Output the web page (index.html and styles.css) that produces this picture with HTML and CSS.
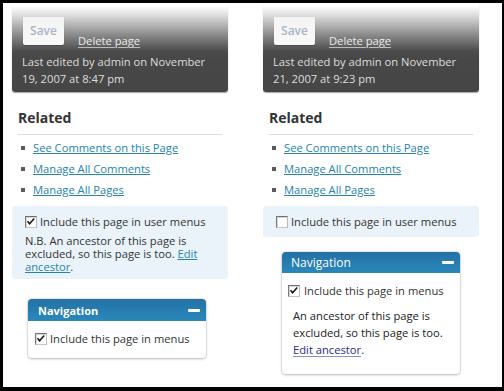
FILE: index.html
```html
<!DOCTYPE html>
<html>
<head>
<meta charset="utf-8">
<link rel="stylesheet" href="styles.css">
</head>
<body>
<div class="frame">
  <div class="col">
    <div class="meta">
      <div class="actions"><span class="save">Save</span><a class="delete" href="#">Delete page</a></div>
      <p class="edited">Last edited by admin on November<br>19, 2007 at 8:47 pm</p>
    </div>
    <div class="related">
      <h3>Related</h3>
      <ul>
        <li><a href="#">See Comments on this Page</a></li>
        <li><a href="#">Manage All Comments</a></li>
        <li><a href="#">Manage All Pages</a></li>
      </ul>
    </div>
    <div class="menu-opt menu-opt-tall">
      <label class="check-row"><span class="cb"><svg viewBox="0 0 12 12" width="12" height="12"><polyline points="2.5,5.2 4.6,7.8 9.2,2.6" fill="none" stroke="#111" stroke-width="1.5"/></svg></span>Include this page in user menus</label>
      <p class="note">N.B. An ancestor of this page is<br>excluded, so this page is too. <a href="#">Edit</a><br><a href="#">ancestor</a>.</p>
    </div>
    <div class="nav-box nav-left">
      <div class="nav-head"><span class="nav-title">Navigation</span><span class="minus"></span></div>
      <div class="nav-body">
        <label class="check-row"><span class="cb"><svg viewBox="0 0 12 12" width="12" height="12"><polyline points="2.5,5.2 4.6,7.8 9.2,2.6" fill="none" stroke="#111" stroke-width="1.5"/></svg></span>Include this page in menus</label>
      </div>
    </div>
  </div>
  <div class="col">
    <div class="meta">
      <div class="actions"><span class="save">Save</span><a class="delete" href="#">Delete page</a></div>
      <p class="edited">Last edited by admin on November<br>21, 2007 at 9:23 pm</p>
    </div>
    <div class="related">
      <h3>Related</h3>
      <ul>
        <li><a href="#">See Comments on this Page</a></li>
        <li><a href="#">Manage All Comments</a></li>
        <li><a href="#">Manage All Pages</a></li>
      </ul>
    </div>
    <div class="menu-opt">
      <label class="check-row"><span class="cb"></span>Include this page in user menus</label>
    </div>
    <div class="nav-box nav-right">
      <div class="nav-head"><span class="nav-title">Navigation</span><span class="minus"></span></div>
      <div class="nav-body">
        <label class="check-row"><span class="cb"><svg viewBox="0 0 12 12" width="12" height="12"><polyline points="2.5,5.2 4.6,7.8 9.2,2.6" fill="none" stroke="#111" stroke-width="1.5"/></svg></span>Include this page in menus</label>
        <p class="nav-note">An ancestor of this page is<br>excluded, so this page is too.<br><a href="#">Edit ancestor</a>.</p>
      </div>
    </div>
  </div>
</div>
</body>
</html>
```
FILE: styles.css
```css
html, body {
  margin: 0;
  padding: 0;
  background: #fff;
}

.frame {
  box-sizing: border-box;
  width: 504px;
  height: 391px;
  border-style: solid;
  border-color: #000;
  border-width: 3px 2px 4px 3px;
  background: #fff;
  display: grid;
  grid-template-columns: 251px 248px;
  align-items: start;
  font-family: "Open Sans", "DejaVu Sans", sans-serif;
  font-size: 11.2px;
  color: #333;
  overflow: hidden;
}

.col {
  padding-left: 9px;
  display: flex;
  flex-direction: column;
  align-items: flex-start;
}

/* dark meta box */
.meta {
  box-sizing: border-box;
  width: 216px;
  height: 89px;
  background: linear-gradient(to bottom, #ffffff 3px, #d6d6d6 14px, #8a8a8a 32px, #4c4c4c 48px, #474747 56px, #464646 100%);
  border-radius: 0 0 3px 3px;
  box-shadow: 0 1px 1px rgba(0, 0, 0, 0.35);
  padding: 0 10px 5px 10px;
}

.actions {
  display: flex;
  align-items: flex-start;
  margin-top: 14px;
  height: 28px;
}

.save {
  box-sizing: border-box;
  width: 41px;
  height: 28px;
  margin-left: 1px;
  background: linear-gradient(to bottom, #f4f4f4, #f9f9f9);
  border-radius: 0 0 2px 2px;
  box-shadow: 0 1px 1px rgba(0, 0, 0, 0.25);
  color: #a9b5c6;
  font-size: 12px;
  font-weight: 600;
  line-height: 28px;
  text-align: center;
}

.delete {
  margin-left: 14px;
  margin-top: 17px;
  line-height: 14px;
  color: #ececec;
  text-decoration: underline;
  text-underline-offset: 2px;
  text-decoration-color: #bbb;
}

.edited {
  margin: 8px 0 0 0;
  line-height: 17px;
  color: #dedede;
  white-space: nowrap;
}

/* related */
.related {
  width: 204px;
  margin: 17px 6px 0 6px;
}

.related h3 {
  margin: 0;
  font-size: 14px;
  font-weight: 700;
  line-height: 18px;
  color: #333;
  padding-bottom: 7px;
  border-bottom: 1px solid #dcdcdc;
}

.related ul {
  list-style: none;
  margin: 2px 0 0 0;
  padding: 0;
}

.related li {
  position: relative;
  line-height: 21px;
  padding-left: 15px;
}

.related li::before {
  content: "";
  position: absolute;
  left: 3px;
  top: 9px;
  width: 4px;
  height: 4px;
  background: #5a5a5a;
}

.related a,
.note a {
  color: #2583ad;
  text-decoration: underline;
  text-underline-offset: 1px;
}

/* menu option box */
.menu-opt {
  box-sizing: border-box;
  width: 216px;
  margin-top: 6px;
  background: #eaf3fa;
  border-radius: 3px;
  padding: 8px 8px 7px 13px;
}

.menu-opt-tall {
  padding-bottom: 6px;
}

.check-row {
  display: flex;
  align-items: center;
  gap: 3px;
  line-height: 16px;
  color: #333;
  white-space: nowrap;
}

.cb {
  box-sizing: border-box;
  flex: none;
  width: 12px;
  height: 12px;
  background: #fff;
  border-style: solid;
  border-width: 1px;
  border-color: #6f6f6f #b9b9b9 #c4c4c4 #7a7a7a;
  box-shadow: inset 1px 1px 0 #d8d8d8;
  position: relative;
}

.cb svg {
  position: absolute;
  left: -1px;
  top: -1px;
}

.note {
  margin: 4px 0 0 0;
  line-height: 13px;
  color: #333;
  white-space: nowrap;
}

/* navigation boxes */
.nav-box {
  box-sizing: border-box;
  width: 178px;
  background: #fff;
  border-radius: 4px;
  overflow: hidden;
  box-shadow: 0 0 0 1px rgba(0, 0, 0, 0.07), 0 1px 3px rgba(0, 0, 0, 0.22);
}

.nav-left {
  margin: 20px 0 0 16px;
}

.nav-right {
  margin: 15px 0 0 19px;
}

.nav-head {
  display: flex;
  align-items: center;
  justify-content: space-between;
  background: linear-gradient(to bottom, #2471a5, #2a88bb);
  color: #fff;
  padding: 0 6px 0 10px;
  height: 22px;
}

.nav-right .nav-head {
  height: 21px;
  padding-left: 9px;
}

.nav-left .nav-title {
  font-size: 11px;
  font-weight: 700;
}

.nav-right .nav-title {
  font-size: 12px;
  font-weight: 400;
}

.minus {
  width: 12px;
  height: 3px;
  background: #fff;
  border-radius: 1px;
}

.nav-left .nav-body {
  padding: 10px 7px 11px 7px;
}

.nav-right .nav-body {
  padding: 10px 6px 16px 6px;
}

.nav-right .check-row {
  gap: 4px;
}

.nav-note {
  margin: 8px 0 0 5px;
  line-height: 17px;
  color: #222;
  white-space: nowrap;
}

.nav-note a {
  color: #2b2b7e;
  text-decoration: underline;
  text-underline-offset: 2px;
  text-decoration-color: #8a96c8;
}
```
